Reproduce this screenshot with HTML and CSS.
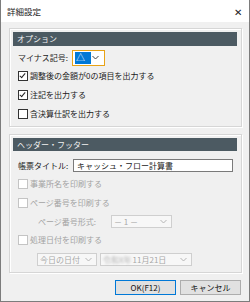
FILE: index.html
```html
<!DOCTYPE html>
<html lang="ja">
<head>
  <meta charset="UTF-8">
  <title>詳細設定</title>
  <link rel="stylesheet" href="styles.css">
</head>
<body>

  <div class="window">
    <div class="titlebar">
      <span class="title">詳細設定</span>
      <span class="close">✕</span>
    </div>

    <div class="content">
      <div class="group group-option">
        <div class="group-head">オプション</div>

        <div class="row row-minus">
          <span class="label">マイナス記号:</span>
          <div class="select focus">
            <span class="picked">△</span>
            <svg class="chev" width="7" height="5" viewBox="0 0 7 5"><polyline points="0.5,1 3.5,4 6.5,1" fill="none" stroke="#444" stroke-width="1"/></svg>
          </div>
        </div>

        <div class="row check"><span class="box on"></span>調整後の金額が0の項目を出力する</div>
        <div class="row check"><span class="box on"></span>注記を出力する</div>
        <div class="row check"><span class="box"></span>含決算仕訳を出力する</div>
      </div>

      <div class="group group-header">
        <div class="group-head">ヘッダー・フッター</div>

        <div class="row row-title">
          <span class="label">帳票タイトル:</span>
          <div class="input">キャッシュ・フロー計算書</div>
        </div>

        <div class="row check off"><span class="box"></span>事業所名を印刷する</div>
        <div class="row check off tall"><span class="box"></span>ページ番号を印刷する</div>

        <div class="row sub off">
          <span class="label">ページ番号形式:</span>
          <div class="select dis sel-page">
            <span class="val">－ 1 －</span>
            <svg class="chev" width="7" height="5" viewBox="0 0 7 5"><polyline points="0.5,1 3.5,4 6.5,1" fill="none" stroke="#b5b5b5" stroke-width="1"/></svg>
          </div>
        </div>

        <div class="row check off"><span class="box"></span>処理日付を印刷する</div>

        <div class="row dates off">
          <div class="select dis sel-today">
            <span class="val">今日の日付</span>
            <svg class="chev" width="7" height="5" viewBox="0 0 7 5"><polyline points="0.5,1 3.5,4 6.5,1" fill="none" stroke="#b5b5b5" stroke-width="1"/></svg>
          </div>
          <div class="select dis sel-date">
            <span class="val"><span class="blur">令和X年</span>11月21日</span>
            <svg class="chev" width="7" height="5" viewBox="0 0 7 5"><polyline points="0.5,1 3.5,4 6.5,1" fill="none" stroke="#b5b5b5" stroke-width="1"/></svg>
          </div>
        </div>
      </div>

      <div class="buttons">
        <button class="btn default">OK(F12)</button>
        <button class="btn">キャンセル</button>
      </div>
    </div>
  </div>

</body>
</html>
```

FILE: styles.css
```css
body {
  margin: 0;
  font-family: "Noto Sans CJK JP", "Noto Sans", sans-serif;
  font-size: 8px;
  color: #1a1a1a;
  background: #f0f0f0;
}

.window {
  width: 250px;
  height: 302px;
  box-sizing: border-box;
  border: 1px solid #7c7c7c;
  border-top: none;
  background: #f0f0f0;
}

.titlebar {
  height: 22px;
  background: #ffffff;
  display: flex;
  align-items: center;
  justify-content: space-between;
  padding: 0 7px 0 6px;
}

.title {
  font-size: 8.5px;
}

.close {
  font-size: 10px;
  color: #222;
}

.content {
  padding: 6px 7px 0 8px;
}

/* etched group frames */
.group {
  border: 1px solid #d6d6d6;
  box-shadow: inset 1px 1px 0 #ffffff, 1px 1px 0 #ffffff;
  padding: 3px 4px 3px 3px;
}

.group-head {
  height: 14px;
  line-height: 14px;
  background: #4c5a62;
  color: #f2f2f2;
  padding-left: 4px;
}

.group-header {
  margin-top: 7px;
}

.group-header .group-head {
  height: 13px;
  line-height: 13px;
}

.row {
  display: flex;
  align-items: center;
  padding-left: 5px;
}

.label {
  white-space: nowrap;
}

.row-minus {
  margin-top: 3px;
  height: 17px;
}

.row-minus .label {
  width: 54px;
}

.check {
  height: 19px;
}

.box {
  width: 8px;
  height: 8px;
  border: 1px solid #333;
  background: #fff;
  margin-right: 2px;
  position: relative;
}

.box.on::after {
  content: "";
  position: absolute;
  left: 2px;
  top: 0px;
  width: 2px;
  height: 5px;
  border: solid #222;
  border-width: 0 1px 1px 0;
  transform: rotate(40deg);
}

.off {
  color: #a3a3a3;
}

.off .box {
  border-color: #c4c4c4;
}

.select {
  display: flex;
  align-items: center;
  justify-content: space-between;
  box-sizing: border-box;
  height: 13px;
  border: 1px solid #adadad;
  background: #fff;
  padding: 0 4px 0 2px;
}

.select.focus {
  width: 33px;
  height: 16px;
  border-color: #e8a317;
  padding: 1px 5px 1px 2px;
}

.picked {
  background: #0078d7;
  color: #fff;
  width: 15px;
  height: 12px;
  line-height: 12px;
  text-align: left;
  padding-left: 1px;
  font-size: 9px;
}

.select.dis {
  background: #f7f7f7;
  border-color: #cfcfcf;
  color: #a8a8a8;
}

.row-title {
  height: 18px;
  margin-top: 5px;
}

.row-title .label {
  width: 55px;
}

.input {
  width: 160px;
  height: 13px;
  line-height: 12px;
  box-sizing: border-box;
  border: 1px solid #7a7a7a;
  background: #fff;
  padding-left: 3px;
}

.tall {
  height: 19px;
}

.sub {
  height: 18px;
  padding-left: 25px;
}

.sub .label {
  width: 73px;
}

.sel-page {
  width: 61px;
}

.dates {
  height: 20px;
  padding-left: 24px;
  gap: 3px;
}

.sel-today {
  width: 60px;
}

.sel-date {
  width: 92px;
}

.blur {
  filter: blur(1.2px);
  color: #b8b8b8;
  margin-right: 1px;
}

.buttons {
  display: flex;
  justify-content: flex-end;
  gap: 4px;
  margin-top: 7px;
  padding-right: 1px;
}

.btn {
  width: 61px;
  height: 15px;
  padding: 0;
  font-family: inherit;
  font-size: 8px;
  color: #111;
  background: #e1e1e1;
  border: 1px solid #adadad;
  border-radius: 0;
}

.btn.default {
  border-color: #0078d7;
}
```
